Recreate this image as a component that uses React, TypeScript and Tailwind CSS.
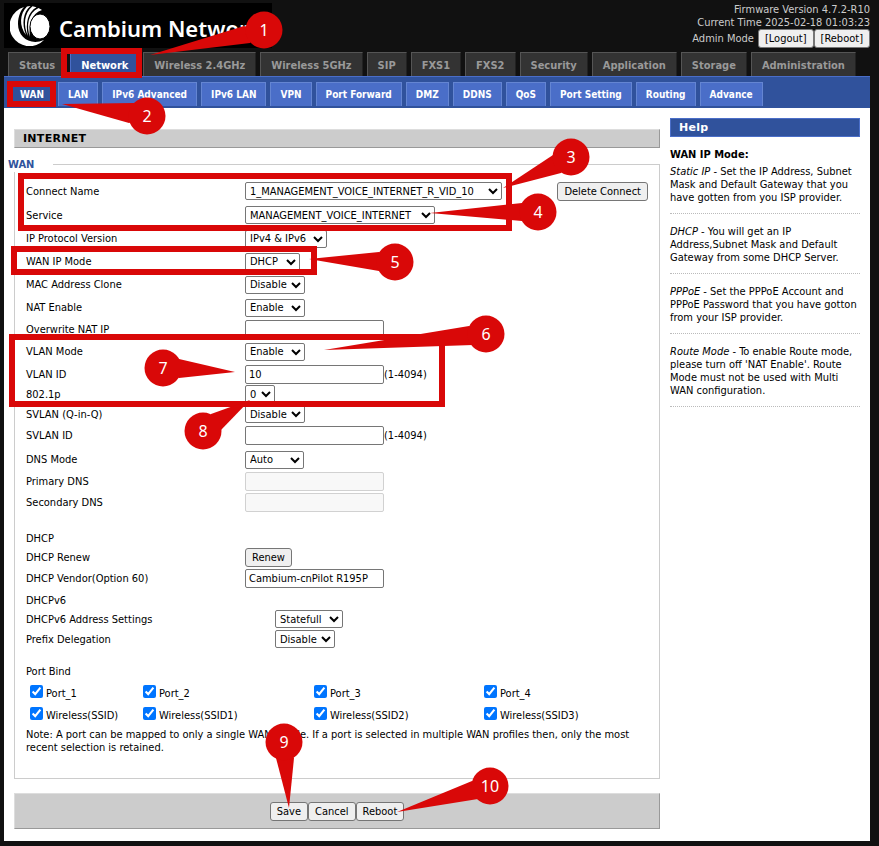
import { useState, type ReactNode } from "react";
import clsx from "clsx";

const tabs = [
  "Status",
  "Network",
  "Wireless 2.4GHz",
  "Wireless 5GHz",
  "SIP",
  "FXS1",
  "FXS2",
  "Security",
  "Application",
  "Storage",
  "Administration",
];

const subTabs = [
  "WAN",
  "LAN",
  "IPv6 Advanced",
  "IPv6 LAN",
  "VPN",
  "Port Forward",
  "DMZ",
  "DDNS",
  "QoS",
  "Port Setting",
  "Routing",
  "Advance",
];

const portRows = [
  ["Port_1", "Port_2", "Port_3", "Port_4"],
  ["Wireless(SSID)", "Wireless(SSID1)", "Wireless(SSID2)", "Wireless(SSID3)"],
];

const helpItems = [
  {
    term: "Static IP",
    text: "Set the IP Address, Subnet Mask and Default Gateway that you have gotten from you ISP provider.",
  },
  {
    term: "DHCP",
    text: "You will get an IP Address,Subnet Mask and Default Gateway from some DHCP Server.",
  },
  {
    term: "PPPoE",
    text: "Set the PPPoE Account and PPPoE Password that you have gotton from your ISP provider.",
  },
  {
    term: "Route Mode",
    text: "To enable Route mode, please turn off 'NAT Enable'. Route Mode must not be used with Multi WAN configuration.",
  },
];

// Numbered markers: circle centre and the points of the tail
const callouts = [
  { n: 1, x: 264, y: 30, tail: "150,55 244,26 262,30 250,43" },
  { n: 2, x: 147, y: 116, tail: "62,104 134,103 147,116 129,123" },
  { n: 3, x: 571, y: 157, tail: "503,188 553,155 571,157 561,173" },
  { n: 4, x: 538, y: 212, tail: "430,213 522,203 538,212 522,221" },
  { n: 5, x: 395, y: 262, tail: "309,259 379,252 395,262 379,271" },
  { n: 6, x: 486, y: 334, tail: "324,350 469,326 486,334 473,345" },
  { n: 7, x: 163, y: 368, tail: "235,372 179,359 163,368 179,378" },
  { n: 8, x: 203, y: 431, tail: "250,400 211,414 203,431 221,430" },
  { n: 9, x: 284, y: 742, tail: "289,808 276,758 284,742 294,758" },
  { n: 10, x: 490, y: 786, tail: "397,812 472,781 490,786 478,799" },
];

function Logo() {
  return (
    <div className="flex h-[45px] w-[268px] items-center bg-black pl-[6px]">
      <svg className="h-10 w-10 shrink-0" viewBox="0 0 40 40" fill="#fff" aria-hidden="true">
        <path d="M14 1A20 20 0 1 0 34 34C20 40 8 31 8 18C8 10 11 4 14 1Z" />
        <path d="M17 .5L20.5 0C13 6 11.5 18 16 29C9 20 9.5 8 17 .5Z" />
        <path d="M22.5 .3L26.5 1.2C18 6 15 17 18 30C13 20 14 7 22.5 .3Z" />
        <path d="M28.5 2L32 4C22 7 18 18 20 31C16 20 18 7 28.5 2Z" />
        <ellipse cx="30" cy="20.5" rx="10" ry="12.5" stroke="#000" />
      </svg>
      <span className="pt-1 pl-[9px] font-['Noto_Sans',sans-serif] text-[22px] leading-7 font-semibold whitespace-nowrap text-white">
        Cambium Networks
      </span>
    </div>
  );
}

const fieldClass = "rounded-[2px] border border-[#767676] bg-white text-black";

interface SelectProps {
  id: string;
  value: string;
  width: string;
  options?: string[];
}

function Select({ id, value, width, options = [] }: SelectProps) {
  return (
    <select id={id} defaultValue={value} className={clsx("h-[18px]", fieldClass, width)}>
      {[value, ...options].map((o) => (
        <option key={o}>{o}</option>
      ))}
    </select>
  );
}

function TextInput({ id, value, disabled }: { id: string; value?: string; disabled?: boolean }) {
  return (
    <input
      id={id}
      type="text"
      defaultValue={value}
      disabled={disabled}
      className="h-[19px] w-[139px] rounded-[2px] border border-[#767676] bg-white px-[3px] text-black disabled:border-[#d1d1d1] disabled:bg-[#f8f8f8]"
    />
  );
}

function Button({ children }: { children: ReactNode }) {
  return (
    <button
      type="button"
      className="h-[19px] rounded-[3px] border border-[#767676] bg-[#efefef] px-[6px] text-black hover:bg-[#e5e5e5]"
    >
      {children}
    </button>
  );
}

interface RowProps {
  id?: string;
  label: string;
  height: string;
  children?: ReactNode;
}

function Row({ id, label, height, children }: RowProps) {
  return (
    <div className={clsx("flex items-center", height)}>
      {id ? (
        <label htmlFor={id} className="w-[219px] shrink-0">
          {label}
        </label>
      ) : (
        <span className="w-[219px] shrink-0">{label}</span>
      )}
      {children}
    </div>
  );
}

function Header() {
  return (
    <header className="flex justify-between pt-[3px]">
      <Logo />
      <div className="text-right text-[11px] leading-[13px] text-[#ccc]">
        <p>Firmware Version 4.7.2-R10</p>
        <p>Current Time 2025-02-18 01:03:23</p>
        <div className="flex items-center justify-end">
          <span className="pr-1">Admin Mode</span>
          <Button>[Logout]</Button>
          <Button>[Reboot]</Button>
        </div>
      </div>
    </header>
  );
}

function Highlights() {
  const box = "pointer-events-none absolute border-6 border-[#d90808]";
  return (
    <>
      <div className={clsx(box, "left-[61px] top-[48px] h-[30px] w-[81px]")} />
      <div className={clsx(box, "left-[7px] top-[81px] h-[26px] w-[49px]")} />
      <div className={clsx(box, "left-[18px] top-[173px] h-[58px] w-[494px]")} />
      <div className={clsx(box, "left-[11px] top-[246px] h-[29px] w-[306px]")} />
      <div className={clsx(box, "left-[9px] top-[334px] h-[73px] w-[436px]")} />
      <svg
        className="pointer-events-none absolute left-0 top-0 h-[846px] w-[879px]"
        viewBox="0 0 879 846"
      >
        {callouts.map((c) => (
          <g key={c.n}>
            <polygon points={c.tail} fill="#d90808" />
            <circle cx={c.x} cy={c.y} r="18.5" fill="#d90808" />
            <text
              x={c.x}
              y={c.y + 6}
              textAnchor="middle"
              fill="#fff"
              className="font-['Noto_Sans',sans-serif] text-[16px]"
            >
              {c.n}
            </text>
          </g>
        ))}
      </svg>
    </>
  );
}

export default function App() {
  const [activeTab, setActiveTab] = useState("Network");
  const [activeSub, setActiveSub] = useState("WAN");

  return (
    <div className="relative min-h-screen bg-[#111] pr-[9px] pb-[5px] pl-1 font-['DejaVu_Sans_Condensed','DejaVu_Sans',sans-serif] text-[11px] leading-[13px] text-black">
      <Header />

      <nav className="mt-1 flex gap-1 pl-1 text-[11px] font-bold">
        {tabs.map((tab) => (
          <button
            key={tab}
            type="button"
            onClick={() => setActiveTab(tab)}
            className={clsx(
              "h-6 border-t border-r border-l px-[10px] pt-[2px] whitespace-nowrap",
              tab === activeTab
                ? "border-[#4a6ec8] bg-[#30529c] text-white"
                : "border-t-[#555] border-r-[#222] border-l-[#555] bg-[#333] text-[#999]"
            )}
          >
            {tab}
          </button>
        ))}
      </nav>

      <nav className="flex h-8 gap-1 border-t border-[#4a6ec8] bg-[#30529c] pt-[5px] pl-[6px] text-[10px] font-bold text-white">
        {subTabs.map((tab) => (
          <button
            key={tab}
            type="button"
            onClick={() => setActiveSub(tab)}
            className={clsx(
              "h-6 border px-[9px] whitespace-nowrap",
              tab === activeSub ? "border-[#30529c] bg-[#30529c]" : "border-[#6485d2] border-b-0 bg-[#4a6ec8]"
            )}
          >
            {tab}
          </button>
        ))}
      </nav>

      <main className="flex gap-[10px] bg-white px-[10px] pt-[10px] pb-3">
        <div className="min-w-0 flex-1 pt-[11px]">
          <h1 className="h-[19px] border border-t-[#ddd] border-r-[#999] border-b-[#999] border-l-[#ddd] bg-[#ccc] pl-2 font-['DejaVu_Sans',sans-serif] text-[11px] leading-[18px] font-bold tracking-wide">
            INTERNET
          </h1>

          <section className="relative mt-4 border border-[#ccc] px-[11px] pt-[14px] pb-6">
            <h2 className="absolute -top-[7px] -left-[7px] w-[45px] bg-white text-[11px] leading-[14px] font-bold text-[#30529c]">
              WAN
            </h2>

            <Row id="connect" label="Connect Name" height="h-6">
              <Select id="connect" value="1_MANAGEMENT_VOICE_INTERNET_R_VID_10" width="w-[257px]" />
              <div className="mr-0 ml-auto">
                <Button>Delete Connect</Button>
              </div>
            </Row>
            <Row id="service" label="Service" height="h-6">
              <Select id="service" value="MANAGEMENT_VOICE_INTERNET" width="w-[190px]" />
            </Row>
            <Row id="ipver" label="IP Protocol Version" height="h-[23px]">
              <Select id="ipver" value="IPv4 & IPv6" width="w-[82px]" options={["IPv4", "IPv6"]} />
            </Row>
            <Row id="ipmode" label="WAN IP Mode" height="h-[23px]">
              <Select id="ipmode" value="DHCP" width="w-[55px]" options={["PPPoE"]} />
            </Row>
            <Row id="mac" label="MAC Address Clone" height="h-[23px]">
              <Select id="mac" value="Disable" width="w-[60px]" options={["Enable"]} />
            </Row>
            <Row id="nat" label="NAT Enable" height="h-[23px]">
              <Select id="nat" value="Enable" width="w-[60px]" options={["Disable"]} />
            </Row>
            <Row id="natip" label="Overwrite NAT IP" height="h-5">
              <TextInput id="natip" />
            </Row>
            <Row id="vlan" label="VLAN Mode" height="h-[25px]">
              <Select id="vlan" value="Enable" width="w-[60px]" options={["Disable"]} />
            </Row>
            <Row id="vlanid" label="VLAN ID" height="h-5">
              <TextInput id="vlanid" value="10" />
              <span>(1-4094)</span>
            </Row>
            <Row id="dot1p" label="802.1p" height="h-5">
              <Select id="dot1p" value="0" width="w-[30px]" options={["1", "2", "3"]} />
            </Row>
            <Row id="svlan" label="SVLAN (Q-in-Q)" height="h-5">
              <Select id="svlan" value="Disable" width="w-[60px]" options={["Enable"]} />
            </Row>
            <Row id="svlanid" label="SVLAN ID" height="h-[23px]">
              <TextInput id="svlanid" />
              <span>(1-4094)</span>
            </Row>
            <Row id="dns" label="DNS Mode" height="h-[25px]">
              <Select id="dns" value="Auto" width="w-[59px]" options={["Manual"]} />
            </Row>
            <Row id="dns1" label="Primary DNS" height="h-[18px]">
              <TextInput id="dns1" disabled />
            </Row>
            <Row id="dns2" label="Secondary DNS" height="h-[25px]">
              <TextInput id="dns2" disabled />
            </Row>

            <div className="mt-[13px]">
              <Row label="DHCP" height="h-5" />
              <Row label="DHCP Renew" height="h-[18px]">
                <Button>Renew</Button>
              </Row>
              <Row id="vendor" label="DHCP Vendor(Option 60)" height="h-[25px]">
                <TextInput id="vendor" value="Cambium-cnPilot R195P" />
              </Row>
              <Row label="DHCPv6" height="h-[18px]" />
              <Row id="v6addr" label="DHCPv6 Address Settings" height="h-5">
                <div className="pl-[30px]">
                  <Select id="v6addr" value="Statefull" width="w-[68px]" options={["Stateless"]} />
                </div>
              </Row>
              <Row id="prefix" label="Prefix Delegation" height="h-5">
                <div className="pl-[30px]">
                  <Select id="prefix" value="Disable" width="w-[60px]" options={["Enable"]} />
                </div>
              </Row>
            </div>

            <div className="mt-[13px]">
              <Row label="Port Bind" height="h-[18px]" />
              {portRows.map((row) => (
                <div key={row[0]} className="grid h-[22px] grid-cols-[113fr_171fr_170fr_164fr] items-center pl-1">
                  {row.map((port) => (
                    <label key={port} className="flex items-center gap-[3px]">
                      <input type="checkbox" defaultChecked className="h-[13px] w-[13px] accent-[#0075ff]" />
                      <span className="pt-1">{port}</span>
                    </label>
                  ))}
                </div>
              ))}
            </div>

            <p className="mt-1 max-w-[610px]">
              Note: A port can be mapped to only a single WAN profile. If a port is selected in multiple
              WAN profiles then, only the most recent selection is retained.
            </p>
          </section>

          <div className="mt-[14px] flex h-9 items-center justify-center border border-t-[#ddd] border-r-[#999] border-b-[#999] border-l-[#ddd] bg-[#ccc]">
            <Button>Save</Button>
            <Button>Cancel</Button>
            <Button>Reboot</Button>
          </div>
        </div>

        <aside className="w-[190px] shrink-0">
          <h2 className="h-[19px] border border-[#4a6ec8] bg-[#30529c] pl-2 font-['DejaVu_Sans',sans-serif] text-[11px] leading-[18px] font-bold tracking-wide text-white">
            Help
          </h2>
          <h3 className="mt-[11px] mb-1 font-bold">WAN IP Mode:</h3>
          {helpItems.map((item) => (
            <p key={item.term} className="mb-[11px] border-b border-dotted border-[#bbb] pb-[9px]">
              <em>{item.term}</em> - {item.text}
            </p>
          ))}
        </aside>
      </main>

      <Highlights />
    </div>
  );
}
